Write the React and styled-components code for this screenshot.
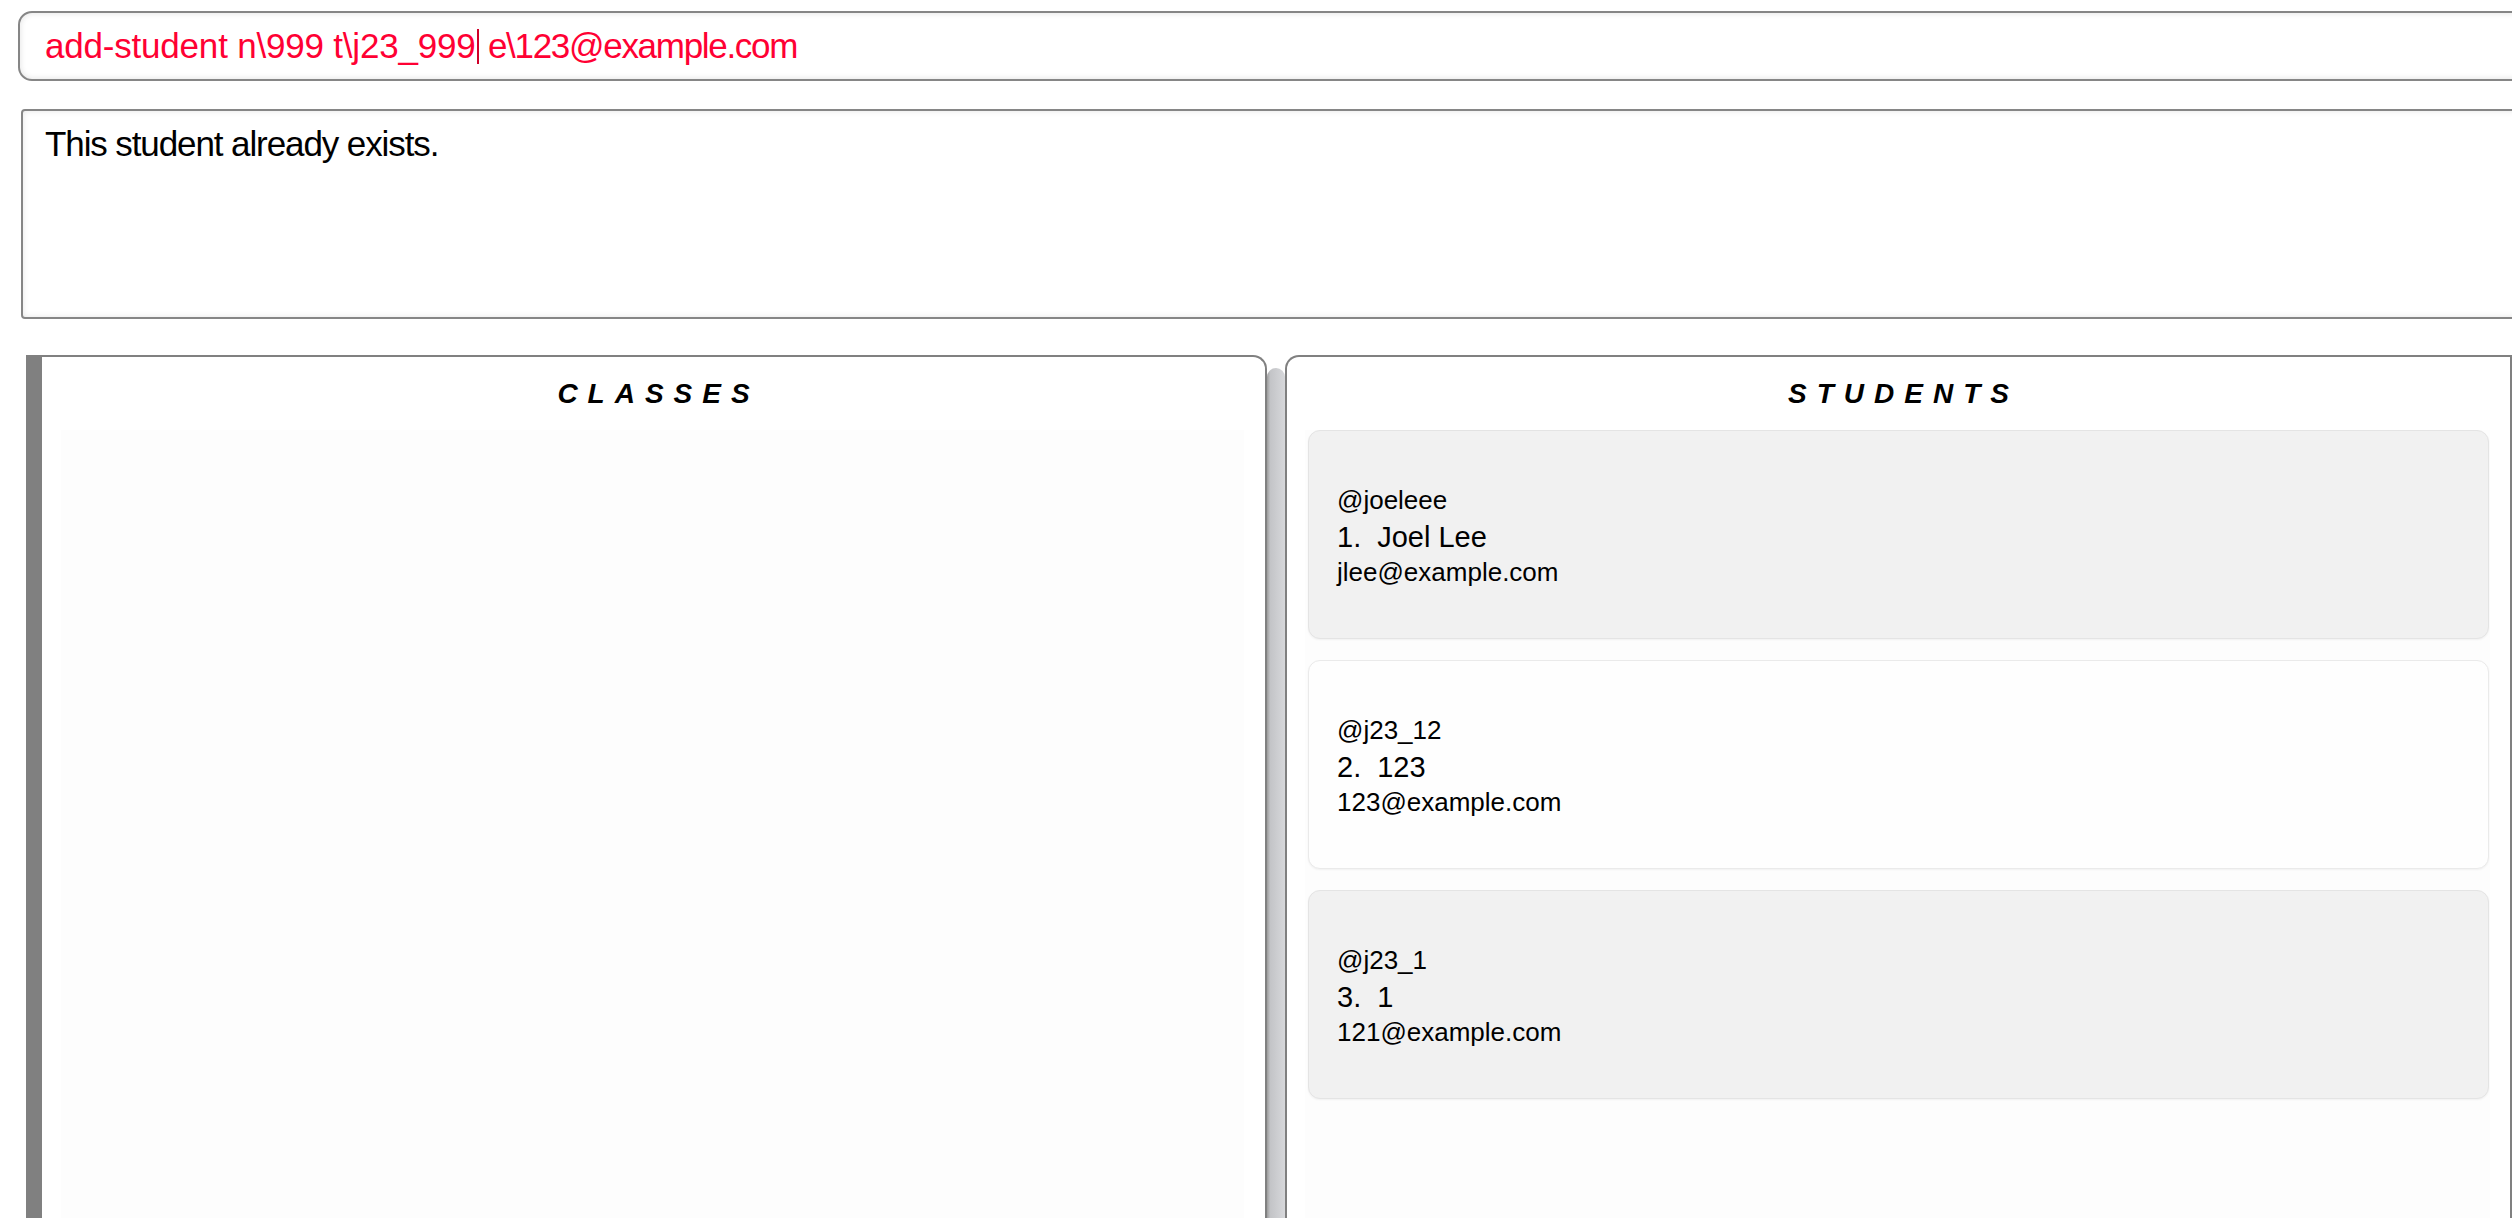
import React from "react";
import styled, { createGlobalStyle } from "styled-components";

const students = [
  { tag: "@joeleee", name: "Joel Lee", email: "jlee@example.com" },
  { tag: "@j23_12", name: "123", email: "123@example.com" },
  { tag: "@j23_1", name: "1", email: "121@example.com" },
];

const GlobalStyle = createGlobalStyle`
  html, body {
    margin: 0;
    padding: 0;
    background: #ffffff;
    overflow: hidden;
  }
  body {
    font-family: "Liberation Sans", Arial, sans-serif;
  }
`;

const App = () => {
  return (
    <>
      <GlobalStyle />
      <Window>
        <CommandBox>
          <CommandText>
            <Segment $spacing="-0.2px">add-student n\999 t\j23_999</Segment>
            <Caret />
            <Segment $spacing="-1.3px">{" e\\123@example.com"}</Segment>
          </CommandText>
        </CommandBox>
        <ResultBox>
          <ResultText>This student already exists.</ResultText>
        </ResultBox>
        <PanelRow>
          <ClassPanel>
            <PanelTitle>CLASSES</PanelTitle>
            <ClassList />
          </ClassPanel>
          <Divider />
          <StudentPanel>
            <PanelTitle>STUDENTS</PanelTitle>
            <StudentList>
              {students.map((s, i) => (
                <StudentCard key={s.tag} $odd={i % 2 === 0}>
                  <Tag>{s.tag}</Tag>
                  <NameRow>
                    <Index>{i + 1}.</Index>
                    <span>{s.name}</span>
                  </NameRow>
                  <Email>{s.email}</Email>
                </StudentCard>
              ))}
            </StudentList>
          </StudentPanel>
        </PanelRow>
      </Window>
    </>
  );
};

export default App;

const Window = styled.div`
  width: 2512px;
  height: 1218px;
  overflow: hidden;
  display: flex;
  flex-direction: column;
`;

const CommandBox = styled.div`
  margin: 11px 0 0 18px;
  width: 2600px;
  height: 70px;
  box-sizing: border-box;
  border: 2px solid #868686;
  border-radius: 14px;
  box-shadow: inset 0 0 6px rgba(0, 0, 0, 0.12);
  display: flex;
  align-items: center;
  padding-left: 25px;
`;

const CommandText = styled.div`
  font-family: "Liberation Sans", Arial, sans-serif;
  font-size: 35px;
  color: #ff0033;
  white-space: pre;
  display: flex;
  align-items: center;
`;

const Segment = styled.span`
  letter-spacing: ${(p) => p.$spacing};
`;

const Caret = styled.span`
  display: inline-block;
  width: 2px;
  height: 35px;
  background: #d0002a;
  margin: 0 1px;
`;

const ResultBox = styled.div`
  margin: 28px 0 0 21px;
  width: 2600px;
  height: 210px;
  box-sizing: border-box;
  border: 2px solid #868686;
  border-radius: 4px;
  box-shadow: inset 0 0 6px rgba(0, 0, 0, 0.1);
  padding: 12px 0 0 22px;
`;

const ResultText = styled.div`
  font-family: "Liberation Sans", Arial, sans-serif;
  font-size: 35px;
  line-height: 1.2;
  letter-spacing: -1.1px;
  color: #000;
`;

const PanelRow = styled.div`
  margin: 36px 0 0 26px;
  flex: 1;
  display: flex;
  min-height: 0;
`;

const ClassPanel = styled.div`
  width: 1241px;
  box-sizing: border-box;
  border-top: 2px solid #808080;
  border-left: 16px solid #808080;
  border-right: 2px solid #808080;
  border-top-right-radius: 14px;
  display: flex;
  flex-direction: column;
  background: #fff;
`;

const Divider = styled.div`
  width: 18px;
  margin-top: 13px;
  border-radius: 9px 9px 0 0;
  background: linear-gradient(to right, #9c9c9c 0, #c3c4c7 18%, #d7d8db 100%);
`;

const StudentPanel = styled.div`
  flex: 1;
  box-sizing: border-box;
  border-top: 2px solid #808080;
  border-left: 2px solid #808080;
  border-right: 2px solid #808080;
  border-top-left-radius: 14px;
  display: flex;
  flex-direction: column;
  background: #fff;
`;

const PanelTitle = styled.div`
  padding: 20px 0 0 10px;
  height: 53px;
  text-align: center;
  font-family: "Liberation Sans", Arial, sans-serif;
  font-size: 28px;
  line-height: 1.2;
  font-weight: bold;
  font-style: italic;
  letter-spacing: 10px;
  color: #000;
`;

const ClassList = styled.div`
  flex: 1;
  margin: 0 21px 0 19px;
  background: #fdfdfd;
`;

const StudentList = styled.div`
  flex: 1;
  margin: 0 20px 0 18px;
  padding: 0 1px 0 3px;
  background: #fdfdfd;
  display: flex;
  flex-direction: column;
  gap: 21px;
`;

const StudentCard = styled.div`
  height: 209px;
  flex-shrink: 0;
  box-sizing: border-box;
  padding: 54px 0 0 28px;
  border-radius: 12px;
  border: 1px solid ${(p) => (p.$odd ? "#e4e4e4" : "#eaeaea")};
  background: ${(p) => (p.$odd ? "#f1f1f1" : "#fefefe")};
  box-shadow: 0 1px 2px rgba(0, 0, 0, 0.05);
  font-family: "Liberation Sans", Arial, sans-serif;
  color: #000;
`;

const Tag = styled.div`
  font-size: 26px;
  line-height: 30px;
`;

const NameRow = styled.div`
  font-size: 29px;
  line-height: 44px;
  white-space: pre;
`;

const Index = styled.span`
  margin-right: 16px;
`;

const Email = styled.div`
  font-size: 26px;
  line-height: 26px;
`;
